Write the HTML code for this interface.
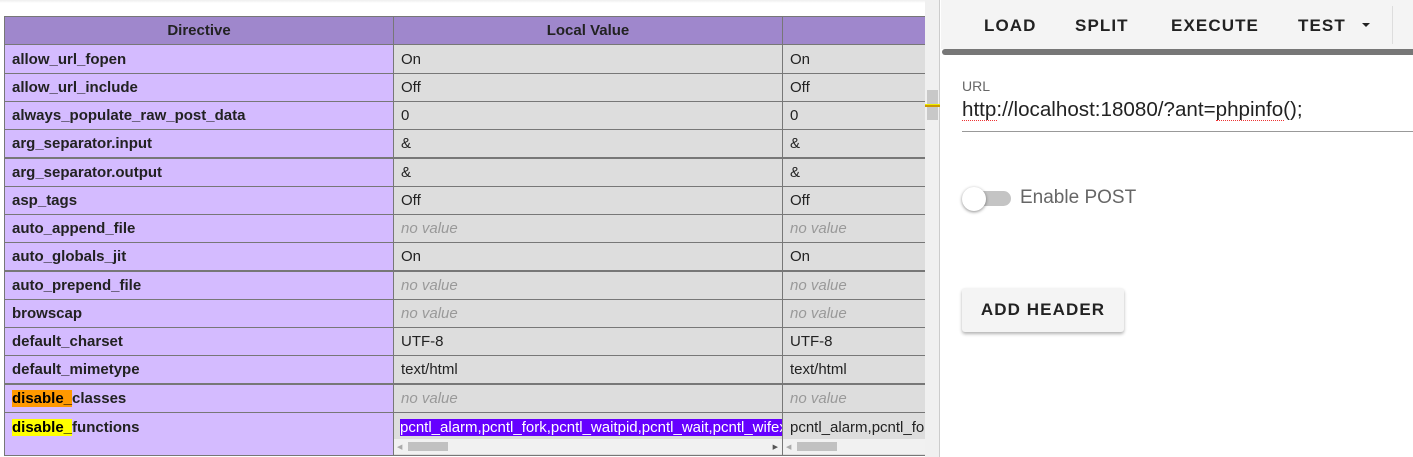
<!DOCTYPE html>
<html><head><meta charset="utf-8"><style>
*{margin:0;padding:0;box-sizing:border-box}
body{width:1413px;height:457px;overflow:hidden;background:#fff;position:relative;font-family:"Liberation Sans",sans-serif}
#left{position:absolute;left:0;top:0;width:925px;height:457px;overflow:hidden;background:#fff}
.topshadow{position:absolute;left:0;top:0;width:925px;height:3px;background:linear-gradient(#eee,#fff)}
.c{position:absolute;font-size:15px;color:#222;white-space:nowrap;overflow:hidden;padding-left:7px;display:flex;align-items:center}
.d{background:#d4bbff;font-weight:bold;left:5px;width:388px}
.v1{background:#dddddd;left:394px;width:388px}
.v2{background:#dddddd;left:783px;width:160px}
.h{background:#9f87cc;font-weight:bold;justify-content:center;padding:0;color:#222}
.nv{color:#999;font-style:italic}
#sb{position:absolute;left:925px;top:0;width:15px;height:457px;background:#f0f0f0;border-right:1px solid #ccc}
#right{position:absolute;left:941px;top:0;width:472px;height:457px;background:#fff}
.tb{position:absolute;left:0;top:0;width:472px;height:49px;background:#f4f4f4}
.tb span{position:absolute;top:16px;font-size:17px;font-weight:bold;letter-spacing:1.1px;color:#222;font-family:"Liberation Sans",sans-serif}
</style></head><body>
<div id="left">
<div class="topshadow"></div>
<div style="position:absolute;left:4px;top:16px;width:925px;height:440px;background:#777"></div>
<div class="c d h" style="top:17px;height:27px">Directive</div>
<div class="c v1 h" style="top:17px;height:27px">Local Value</div>
<div class="c v2 h" style="top:17px;height:27px"></div>

<div class="c d" style="top:45px;height:28px">allow_url_fopen</div><div class="c v1" style="top:45px;height:28px">On</div><div class="c v2" style="top:45px;height:28px">On</div>
<div class="c d" style="top:74px;height:27px">allow_url_include</div><div class="c v1" style="top:74px;height:27px">Off</div><div class="c v2" style="top:74px;height:27px">Off</div>
<div class="c d" style="top:102px;height:27px">always_populate_raw_post_data</div><div class="c v1" style="top:102px;height:27px">0</div><div class="c v2" style="top:102px;height:27px">0</div>
<div class="c d" style="top:130px;height:27px">arg_separator.input</div><div class="c v1" style="top:130px;height:27px">&amp;</div><div class="c v2" style="top:130px;height:27px">&amp;</div>
<div class="c d" style="top:159px;height:27px">arg_separator.output</div><div class="c v1" style="top:159px;height:27px">&amp;</div><div class="c v2" style="top:159px;height:27px">&amp;</div>
<div class="c d" style="top:187px;height:27px">asp_tags</div><div class="c v1" style="top:187px;height:27px">Off</div><div class="c v2" style="top:187px;height:27px">Off</div>
<div class="c d" style="top:215px;height:27px">auto_append_file</div><div class="c v1 nv" style="top:215px;height:27px">no value</div><div class="c v2 nv" style="top:215px;height:27px">no value</div>
<div class="c d" style="top:243px;height:27px">auto_globals_jit</div><div class="c v1" style="top:243px;height:27px">On</div><div class="c v2" style="top:243px;height:27px">On</div>
<div class="c d" style="top:272px;height:27px">auto_prepend_file</div><div class="c v1 nv" style="top:272px;height:27px">no value</div><div class="c v2 nv" style="top:272px;height:27px">no value</div>
<div class="c d" style="top:300px;height:27px">browscap</div><div class="c v1 nv" style="top:300px;height:27px">no value</div><div class="c v2 nv" style="top:300px;height:27px">no value</div>
<div class="c d" style="top:328px;height:27px">default_charset</div><div class="c v1" style="top:328px;height:27px">UTF-8</div><div class="c v2" style="top:328px;height:27px">UTF-8</div>
<div class="c d" style="top:356px;height:27px">default_mimetype</div><div class="c v1" style="top:356px;height:27px">text/html</div><div class="c v2" style="top:356px;height:27px">text/html</div>
<div class="c d" style="top:385px;height:27px"><span style="background:#ff9900;color:#000">disable_</span>classes</div><div class="c v1 nv" style="top:385px;height:27px">no value</div><div class="c v2 nv" style="top:385px;height:27px">no value</div>
<div class="c d" style="top:413px;height:42px;align-items:flex-start;padding-top:6px"><span style="background:#ffff00;color:#000">disable_</span>functions</div>
<div class="c v1" style="top:413px;height:42px;align-items:flex-start;padding-top:6px;padding-left:6px;background:#ddd"><span style="background:#6600ff;color:#fff;display:inline-block;width:382px;overflow:hidden">pcntl_alarm,pcntl_fork,pcntl_waitpid,pcntl_wait,pcntl_wifexited</span></div>
<div class="c v2" style="top:413px;height:42px;align-items:flex-start;padding-top:6px">pcntl_alarm,pcntl_fork</div>
<div style="position:absolute;left:394px;top:439px;width:388px;height:15px;background:#f1f1f1"><div style="position:absolute;left:14px;top:3px;width:40px;height:9px;background:#c1c1c1"></div><div style="position:absolute;left:3px;top:4px;font-size:7px;color:#aaa">◀</div><div style="position:absolute;right:4px;top:4px;font-size:7px;color:#555">▶</div></div>
<div style="position:absolute;left:783px;top:439px;width:160px;height:15px;background:#f1f1f1"><div style="position:absolute;left:14px;top:3px;width:40px;height:9px;background:#c1c1c1"></div><div style="position:absolute;left:3px;top:4px;font-size:7px;color:#aaa">◀</div></div>
</div>
<div id="sb"><div style="position:absolute;left:2px;top:90px;width:11px;height:30px;background:#c8c8c8"></div><div style="position:absolute;left:0;top:104px;width:15px;height:3px;background:#cc9900;border-top:1px solid #ee0;"></div></div>
<div id="right">
<div class="tb">
<span style="left:43px">LOAD</span>
<span style="left:134px">SPLIT</span>
<span style="left:230px">EXECUTE</span>
<span style="left:357px">TEST</span>
<div style="position:absolute;left:421px;top:23px;width:0;height:0;border-left:4px solid transparent;border-right:4px solid transparent;border-top:4px solid #222"></div>
<div style="position:absolute;left:451px;top:6px;width:1px;height:38px;background:#ddd"></div>
</div>
<div style="position:absolute;left:1px;top:49px;width:480px;height:6px;background:#777;border-radius:3px 0 0 3px"></div>
<div style="position:absolute;left:21px;top:78px;font-size:14px;color:#666">URL</div>
<div style="position:absolute;left:21px;top:98px;font-size:20.6px;color:#222">http://localhost:18080/?ant=phpinfo();</div>
<div style="position:absolute;left:21px;top:119px;width:35px;height:2px;border-bottom:1px dotted #e33"></div>
<div style="position:absolute;left:275px;top:119px;width:68px;height:2px;border-bottom:1px dotted #e33"></div>
<div style="position:absolute;left:21px;top:131px;width:451px;height:1px;background:#999"></div>
<div style="position:absolute;left:28px;top:191px;width:42px;height:15px;border-radius:8px;background:#c4c4c4"></div>
<div style="position:absolute;left:21px;top:187px;width:24px;height:24px;border-radius:50%;background:#fff;box-shadow:0 1px 3px rgba(0,0,0,.45)"></div>
<div style="position:absolute;left:79px;top:187px;font-size:19px;color:#666">Enable POST</div>
<div style="position:absolute;left:21px;top:288px;width:162px;height:44px;background:#f4f4f4;border-radius:3px;box-shadow:0 2px 3px rgba(0,0,0,.3);font-size:17px;font-weight:bold;letter-spacing:1.1px;color:#222;display:flex;align-items:center;justify-content:center">ADD HEADER</div>
</div>
</body></html>
